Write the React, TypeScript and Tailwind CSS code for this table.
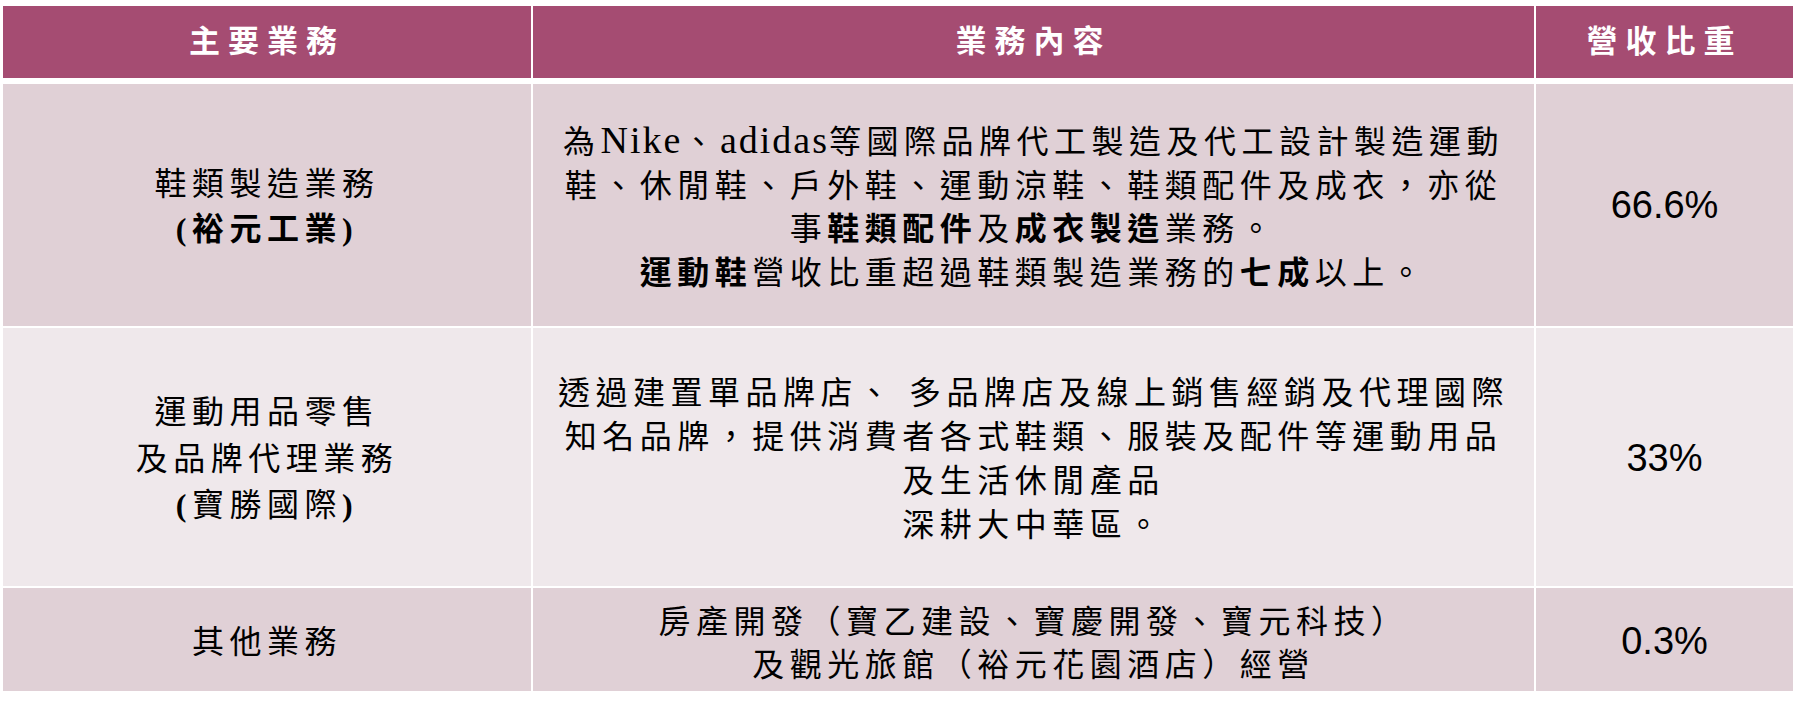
import React from "react";

const body = "font-['Liberation_Serif','Noto_Sans_CJK_TC',serif] text-[32px] tracking-[5.5px] text-black";
const pct = "font-['Liberation_Sans',sans-serif] text-[38px] text-black";

const Cell = ({ className = "", children }: { className?: string; children?: React.ReactNode }) => (
  <div className={`flex items-center justify-center text-center whitespace-nowrap ${className}`}>
    {children}
  </div>
);

export default function App() {
  return (
    <div className="w-[1799px] h-[708px] bg-white pl-[3px] pt-[6px]">
      {/* header */}
      <div className="grid grid-cols-[528px_1001px_257px] gap-x-[2px] h-[72px]">
        {["主要業務", "業務內容", "營收比重"].map((h) => (
          <Cell
            key={h}
            className="bg-[#a54c72] text-white font-bold font-['Noto_Sans_CJK_TC',sans-serif] text-[31px] tracking-[8px] pb-[6px]"
          >
            {h}
          </Cell>
        ))}
      </div>

      {/* row 1 */}
      <div className="grid grid-cols-[528px_1001px_257px] gap-x-[2px] h-[242px] mt-[6px] bg-white">
        <Cell className={`bg-[#e0d0d6] ${body} leading-[45px] pt-[4px]`}>
          <div>
            鞋類製造業務
            <br />
            <span className="font-bold">(裕元工業)</span>
          </div>
        </Cell>
        <Cell className={`bg-[#e0d0d6] ${body} leading-[43.5px] pt-[4px]`}>
          <div>
            為<span className="text-[38px] tracking-[2px]">Nike</span>、
            <span className="text-[38px] tracking-[2px]">adidas</span>等國際品牌代工製造及代工設計製造運動
            <br />
            鞋、休閒鞋、戶外鞋、運動涼鞋、鞋類配件及成衣，亦從
            <br />
            事<span className="font-bold">鞋類配件</span>及<span className="font-bold">成衣製造</span>業務。
            <br />
            <span className="font-bold">運動鞋</span>營收比重超過鞋類製造業務的
            <span className="font-bold">七成</span>以上。
          </div>
        </Cell>
        <Cell className={`bg-[#e0d0d6] ${pct}`}>66.6%</Cell>
      </div>

      {/* row 2 */}
      <div className="grid grid-cols-[528px_1001px_257px] gap-x-[2px] h-[258px] mt-[2px]">
        <Cell className={`bg-[#efe8eb] ${body} leading-[46.5px] pt-[4px]`}>
          <div>
            運動用品零售
            <br />
            及品牌代理業務
            <br />
            <span className="font-bold">(</span>寶勝國際<span className="font-bold">)</span>
          </div>
        </Cell>
        <Cell className={`bg-[#efe8eb] ${body} leading-[44px] pt-[4px]`}>
          <div>
            透過建置單品牌店、 多品牌店及線上銷售經銷及代理國際
            <br />
            知名品牌，提供消費者各式鞋類、服裝及配件等運動用品
            <br />
            及生活休閒產品
            <br />
            深耕大中華區。
          </div>
        </Cell>
        <Cell className={`bg-[#efe8eb] ${pct} pt-[2px]`}>33%</Cell>
      </div>

      {/* row 3 */}
      <div className="grid grid-cols-[528px_1001px_257px] gap-x-[2px] h-[103px] mt-[2px]">
        <Cell className={`bg-[#e0d0d6] ${body} pt-[4px]`}>其他業務</Cell>
        <Cell className={`bg-[#e0d0d6] ${body} leading-[43px] pt-[8px]`}>
          <div>
            房產開發（寶乙建設、寶慶開發、寶元科技）
            <br />
            及觀光旅館（裕元花園酒店）經營
          </div>
        </Cell>
        <Cell className={`bg-[#e0d0d6] ${pct} pt-[4px]`}>0.3%</Cell>
      </div>
    </div>
  );
}
